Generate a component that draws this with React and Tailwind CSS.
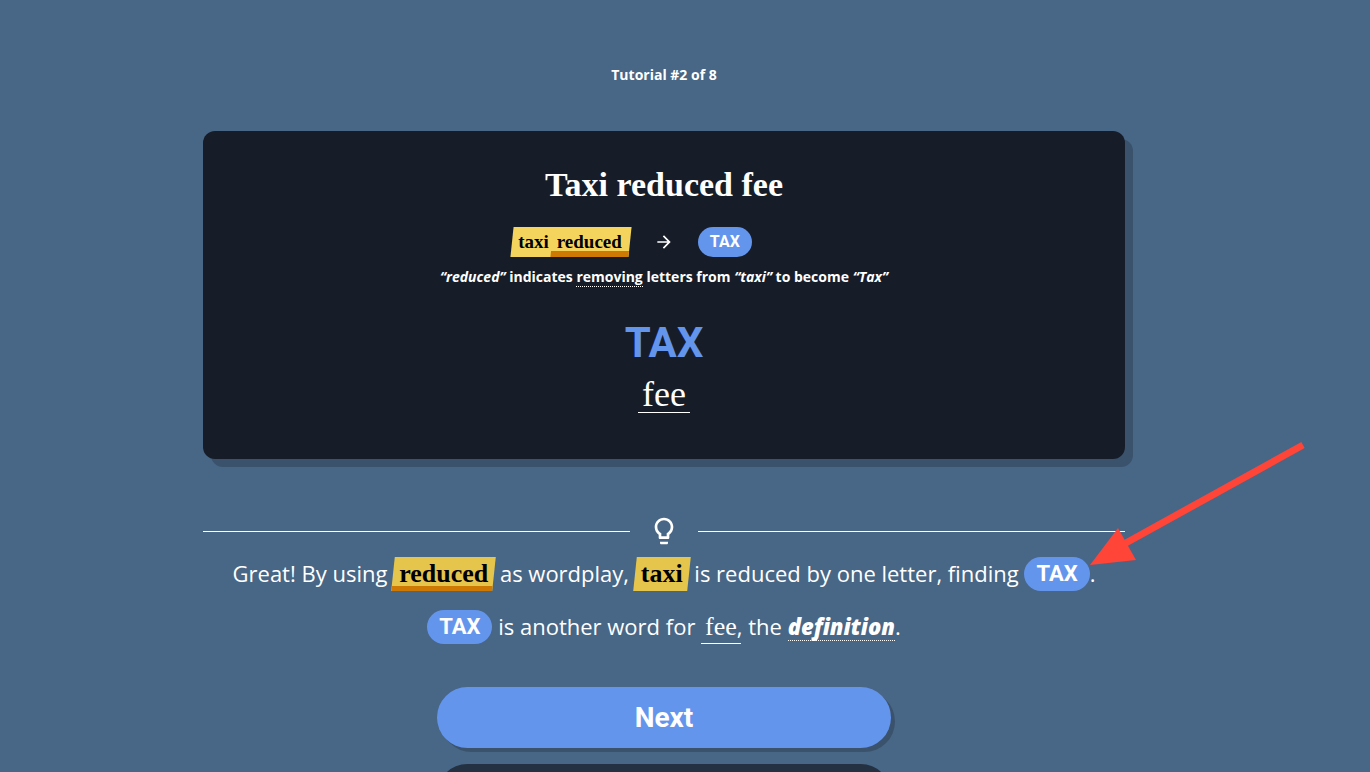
import React from 'react'
import { MdLightbulbOutline, MdArrowForward } from 'react-icons/md'

const Answer = ({ children, className = '' }) => (
  <span className={`inline-flex items-center justify-center rounded-full bg-[#6495ed] px-3 font-[Roboto,sans-serif] font-bold text-white ${className}`}>
    {children}
  </span>
)

// Slanted marker behind a word of the clue
const Marker = ({ children, indicator = false }) => (
  <span className="relative isolate inline-flex h-[34px] items-center px-1.5 font-['Liberation_Serif',serif] text-[26px] leading-8 font-bold text-black">
    <span className="absolute inset-0 -z-10 -skew-x-6 overflow-hidden bg-[#e5c54c]">
      {indicator && <span className="absolute inset-x-0 bottom-0 h-[5px] bg-[#cf7905]" />}
    </span>
    {children}
  </span>
)

const ClueCard = () => (
  <section className="flex flex-col items-center rounded-xl bg-[#161d28] px-6 pt-8 pb-[46px] text-white shadow-[8px_8px_0_#3b526c]">
    <h1 className="font-['Liberation_Serif',serif] text-[34px] leading-11 font-bold">Taxi reduced fee</h1>

    <div className="mt-5 flex h-[30px] items-center pr-16">
      <div className="relative isolate flex h-full items-center font-['Liberation_Serif',serif] text-[19px] font-bold text-black">
        <span className="absolute inset-0 -z-10 flex -skew-x-6 items-end overflow-hidden bg-[#f5d45e]">
          <span className="ml-10 h-1.5 flex-1 bg-[#cf7905]" />
        </span>
        <span className="pl-1.5">taxi</span>
        <span className="px-2">reduced</span>
      </div>
      <MdArrowForward className="mx-6 size-5" />
      <Answer className="h-[30px] text-base">TAX</Answer>
    </div>

    <p className="mt-2 text-[14px] leading-6 font-bold">
      <em>“reduced”</em> indicates{' '}
      <a href="#removing" className="border-b border-dotted border-white">removing</a> letters from{' '}
      <em>“taxi”</em> to become <em>“Tax”</em>
    </p>

    <p className="mt-7 font-[Roboto,sans-serif] text-[42px] leading-[52px] font-bold text-[#6495ed]">TAX</p>
    <p className="mt-[7px] border-b border-white px-1 font-['Liberation_Serif',serif] text-[36px] leading-9">fee</p>
  </section>
)

const PointerArrow = () => (
  <svg
    className="pointer-events-none absolute -top-[109px] -right-[181px]"
    width="216"
    height="130"
    viewBox="0 0 216 130"
    aria-hidden="true"
  >
    <path d="M213 7 L34 106" stroke="#ff4438" strokeWidth="7" fill="none" />
    <path d="M0 127 L28 90 L46 122 Z" fill="#ff4438" />
  </svg>
)

const App = () => {
  return (
    <div className="min-h-screen overflow-hidden bg-[#486685] pr-[42px] font-['Open_Sans',sans-serif] text-white">
      <main className="mx-auto w-full max-w-[922px] pt-16">
        <p className="text-center text-[14px] leading-[22px] font-bold">Tutorial #2 of 8</p>

        <div className="mt-[45px]">
          <ClueCard />
        </div>

        <div className="mt-14 flex items-center">
          <hr className="flex-1 border-white" />
          <MdLightbulbOutline className="mx-[18px] size-8" />
          <hr className="flex-1 border-white" />
        </div>

        <section className="relative text-center text-[22px]">
          <p className="flex min-h-[53px] flex-wrap items-center justify-center whitespace-pre">
            <span>Great! By using </span>
            <Marker indicator>reduced</Marker>
            <span> as wordplay, </span>
            <Marker>taxi</Marker>
            <span> is reduced by one letter, finding </span>
            <Answer className="h-[34px]">TAX</Answer>
            <span>.</span>
          </p>
          <p className="flex min-h-[53px] flex-wrap items-center justify-center whitespace-pre">
            <Answer className="h-[34px]">TAX</Answer>
            <span> is another word for </span>
            <span className="-mr-1 border-b border-white px-1 pt-0.5 font-['Liberation_Serif',serif] text-[26px] leading-8">fee</span>
            <span>, the </span>
            <a href="#definition" className="border-b border-dotted border-white leading-7 font-extrabold italic">definition</a>
            <span>.</span>
          </p>
          <PointerArrow />
        </section>

        <div className="mx-auto mt-[34px] flex h-[85px] w-full max-w-[454px] flex-col gap-4">
          <button
            type="button"
            className="h-[61px] shrink-0 rounded-full bg-[#6495ed] font-[Roboto,sans-serif] text-[28px] font-bold shadow-[4px_4px_0_#3b526c]"
          >
            Next
          </button>
          <button type="button" aria-label="Back" className="h-[61px] shrink-0 rounded-full bg-[#233142]" />
        </div>
      </main>
    </div>
  )
}

export default App
